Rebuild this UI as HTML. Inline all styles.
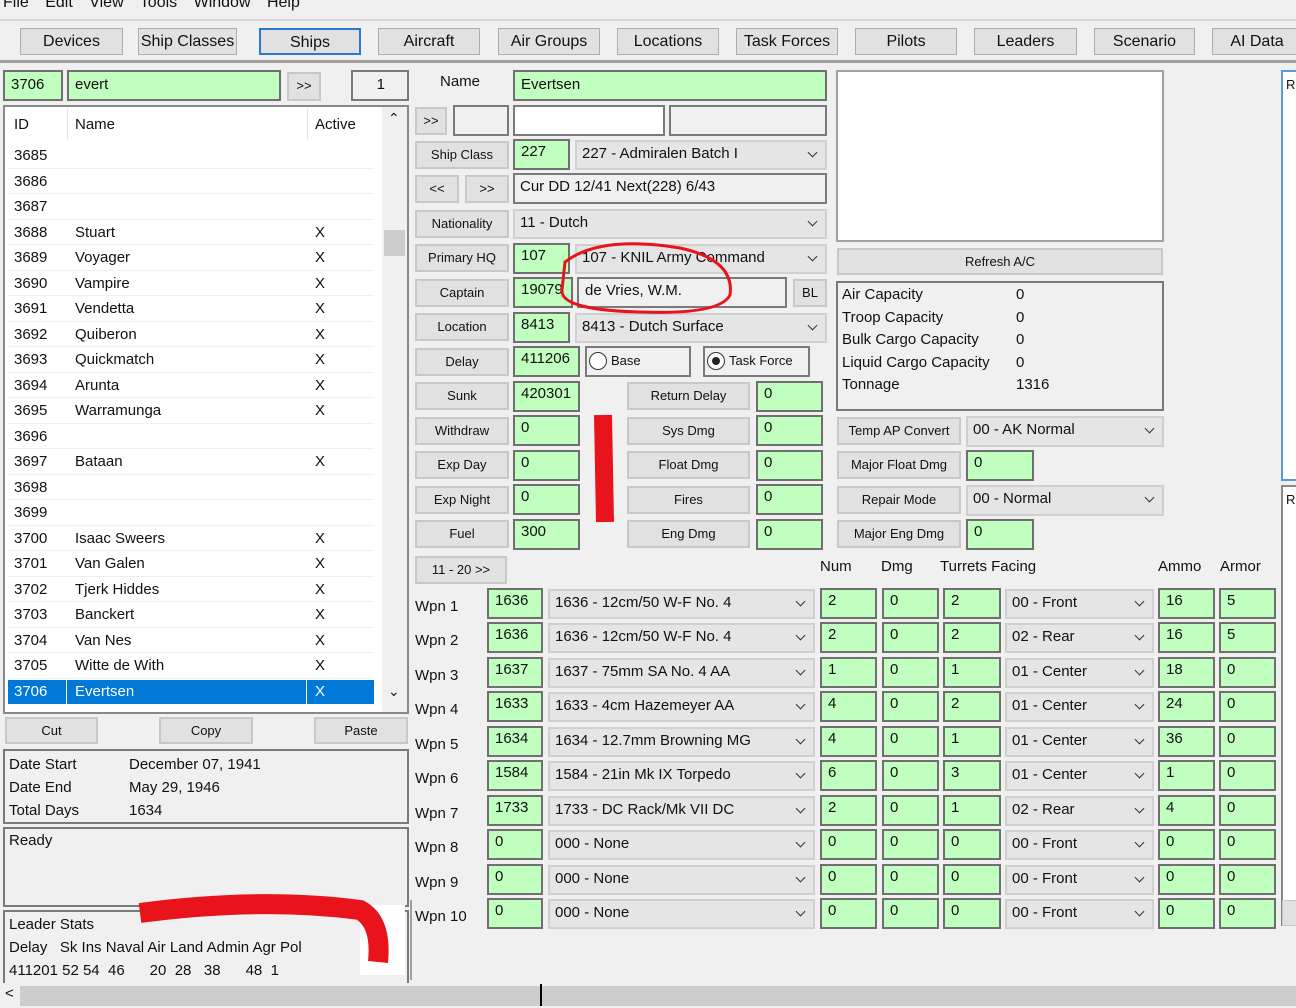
<!DOCTYPE html>
<html><head><meta charset="utf-8"><style>
*{box-sizing:border-box;margin:0;padding:0}
body{width:1296px;height:1008px;background:#f0f0f0;position:relative;overflow:hidden;font-family:"Liberation Sans",sans-serif;color:#111}
div{position:absolute}
.tb{height:27px;top:28px;background:#e1e1e1;border:1px solid #adadad;font-size:16px;text-align:center;line-height:25px}
.g{background:#c0ffc0;border:2px solid #6f6f6f;font-size:15px;padding-left:6px;line-height:22px}
.w{background:#fff;border:1px solid #7a7a7a}
.e{background:#f0f0f0;border:2px solid #7a7a7a}
.b{background:#e1e1e1;border:2px solid #c8c8c8;font-size:13px;text-align:center;line-height:24px}
.dd{background:#e5e5e5;border:2px solid #d0d0d0;font-size:15px;padding-left:5px;line-height:24px}
.dd:after{content:"";position:absolute;right:9px;top:7px;width:6px;height:6px;border-right:1.3px solid #333;border-bottom:1.3px solid #333;transform:rotate(45deg)}
.t{font-size:15px;white-space:nowrap}
.row{left:0;width:366px;height:25.5px;border-bottom:1px solid #f0f0f0;font-size:15px;line-height:25px}
.row span{position:absolute}
</style></head><body>
<div class="t" style="left:3px;top:-6px;font-size:16px;word-spacing:12px">File Edit View Tools Window Help</div>
<div style="left:0;top:19px;width:1296px;height:2px;background:#d8d8d8"></div>
<div class="tb" style="left:20px;width:103px">Devices</div>
<div class="tb" style="left:138px;width:99px">Ship Classes</div>
<div class="tb" style="left:259px;width:102px;border:2px solid #2a7ad2">Ships</div>
<div class="tb" style="left:378px;width:102px">Aircraft</div>
<div class="tb" style="left:498px;width:102px">Air Groups</div>
<div class="tb" style="left:617px;width:102px">Locations</div>
<div class="tb" style="left:736px;width:102px">Task Forces</div>
<div class="tb" style="left:855px;width:102px">Pilots</div>
<div class="tb" style="left:974px;width:103px">Leaders</div>
<div class="tb" style="left:1094px;width:101px">Scenario</div>
<div class="tb" style="left:1212px;width:90px">AI Data</div>
<div style="left:0;top:60px;width:1296px;height:3px;background:#a0a0a0"></div>

<!-- left -->
<div class="g" style="left:3px;top:70px;width:60px;height:31px;line-height:26px">3706</div>
<div class="g" style="left:67px;top:70px;width:214px;height:31px;line-height:26px">evert</div>
<div class="b" style="left:287px;top:72px;width:34px;height:29px">&gt;&gt;</div>
<div class="e" style="left:351px;top:70px;width:58px;height:31px;text-align:right;padding-right:22px;font-size:15px;line-height:26px">1</div>
<div class="w" style="left:3px;top:105px;width:406px;height:609px;border:2px solid #888"></div>
<div class="t" style="left:14px;top:116px">ID</div>
<div class="t" style="left:75px;top:116px">Name</div>
<div class="t" style="left:315px;top:116px">Active</div>
<div style="left:67px;top:108px;width:1px;height:32px;background:#e5e5e5"></div>
<div style="left:307px;top:108px;width:1px;height:32px;background:#e5e5e5"></div>
<div style="left:382px;top:107px;width:25px;height:605px;background:#f0f0f0"></div>
<div class="t" style="left:388px;top:110px;font-size:14px">&#8963;</div>
<div class="t" style="left:388px;top:683px;font-size:14px">&#8964;</div>
<div style="left:384px;top:230px;width:21px;height:26px;background:#cdcdcd"></div>
<div style="left:8px;top:143px;width:366px;height:537px">
<div class="row" style="position:relative"><span style="left:6px">3685</span></div>
<div class="row" style="position:relative"><span style="left:6px">3686</span></div>
<div class="row" style="position:relative"><span style="left:6px">3687</span></div>
<div class="row" style="position:relative"><span style="left:6px">3688</span><span style="left:67px">Stuart</span><span style="left:307px">X</span></div>
<div class="row" style="position:relative"><span style="left:6px">3689</span><span style="left:67px">Voyager</span><span style="left:307px">X</span></div>
<div class="row" style="position:relative"><span style="left:6px">3690</span><span style="left:67px">Vampire</span><span style="left:307px">X</span></div>
<div class="row" style="position:relative"><span style="left:6px">3691</span><span style="left:67px">Vendetta</span><span style="left:307px">X</span></div>
<div class="row" style="position:relative"><span style="left:6px">3692</span><span style="left:67px">Quiberon</span><span style="left:307px">X</span></div>
<div class="row" style="position:relative"><span style="left:6px">3693</span><span style="left:67px">Quickmatch</span><span style="left:307px">X</span></div>
<div class="row" style="position:relative"><span style="left:6px">3694</span><span style="left:67px">Arunta</span><span style="left:307px">X</span></div>
<div class="row" style="position:relative"><span style="left:6px">3695</span><span style="left:67px">Warramunga</span><span style="left:307px">X</span></div>
<div class="row" style="position:relative"><span style="left:6px">3696</span></div>
<div class="row" style="position:relative"><span style="left:6px">3697</span><span style="left:67px">Bataan</span><span style="left:307px">X</span></div>
<div class="row" style="position:relative"><span style="left:6px">3698</span></div>
<div class="row" style="position:relative"><span style="left:6px">3699</span></div>
<div class="row" style="position:relative"><span style="left:6px">3700</span><span style="left:67px">Isaac Sweers</span><span style="left:307px">X</span></div>
<div class="row" style="position:relative"><span style="left:6px">3701</span><span style="left:67px">Van Galen</span><span style="left:307px">X</span></div>
<div class="row" style="position:relative"><span style="left:6px">3702</span><span style="left:67px">Tjerk Hiddes</span><span style="left:307px">X</span></div>
<div class="row" style="position:relative"><span style="left:6px">3703</span><span style="left:67px">Banckert</span><span style="left:307px">X</span></div>
<div class="row" style="position:relative"><span style="left:6px">3704</span><span style="left:67px">Van Nes</span><span style="left:307px">X</span></div>
<div class="row" style="position:relative"><span style="left:6px">3705</span><span style="left:67px">Witte de With</span><span style="left:307px">X</span></div>
</div>
<div style="left:8px;top:680px;width:366px;height:24px;background:#0078d7;color:#fff;font-size:15px;line-height:24px"><span style="position:absolute;left:6px">3706</span><span style="position:absolute;left:67px">Evertsen</span><span style="position:absolute;left:307px">X</span><span style="position:absolute;left:58px;top:0;width:1px;height:24px;background:#fff"></span><span style="position:absolute;left:298px;top:0;width:1px;height:24px;background:#fff"></span></div>
<div class="b" style="left:5px;top:717px;width:93px;height:27px">Cut</div>
<div class="b" style="left:159px;top:717px;width:94px;height:27px">Copy</div>
<div class="b" style="left:314px;top:717px;width:94px;height:27px">Paste</div>
<div class="e" style="left:3px;top:749px;width:406px;height:75px"></div>
<div class="t" style="left:9px;top:753px;line-height:23px">Date Start<br>Date End<br>Total Days</div>
<div class="t" style="left:129px;top:753px;line-height:23px">December 07, 1941<br>May 29, 1946<br>1634</div>
<div class="e" style="left:3px;top:827px;width:406px;height:80px"></div>
<div class="t" style="left:9px;top:832px">Ready</div>
<div class="e" style="left:3px;top:910px;width:406px;height:75px"></div>
<div class="t" style="left:9px;top:913px;line-height:23px;white-space:pre">Leader Stats
Delay   Sk Ins Naval Air Land Admin Agr Pol
411201 52 54  46      20  28   38      48  1</div>
<div style="left:0;top:983px;width:1296px;height:25px;background:#f0f0f0"></div>
<div style="left:20px;top:986px;width:1276px;height:20px;background:#cdcdcd"></div>
<div class="t" style="left:5px;top:985px">&lt;</div>
<div style="left:540px;top:984px;width:2px;height:22px;background:#000"></div>

<!-- middle -->
<div class="t" style="left:440px;top:73px">Name</div>
<div class="g" style="left:513px;top:70px;width:314px;height:31px;line-height:26px">Evertsen</div>
<div class="b" style="left:415px;top:107px;width:32px;height:28px">&gt;&gt;</div>
<div class="e" style="left:453px;top:105px;width:56px;height:31px"></div>
<div class="w" style="left:513px;top:105px;width:152px;height:31px;border:2px solid #7a7a7a"></div>
<div class="e" style="left:669px;top:105px;width:158px;height:31px"></div>
<div class="b" style="left:415px;top:141px;width:94px;height:28px">Ship Class</div>
<div class="g" style="left:513px;top:139px;width:57px;height:31px">227</div>
<div class="dd" style="left:575px;top:140px;width:252px;height:30px">227 - Admiralen Batch I</div>
<div class="b" style="left:415px;top:175px;width:44px;height:28px">&lt;&lt;</div>
<div class="b" style="left:465px;top:175px;width:44px;height:28px">&gt;&gt;</div>
<div class="e" style="left:513px;top:173px;width:314px;height:31px;font-size:15px;padding-left:5px;line-height:24px">Cur DD 12/41 Next(228) 6/43</div>
<div class="b" style="left:415px;top:210px;width:94px;height:28px">Nationality</div>
<div class="dd" style="left:513px;top:209px;width:314px;height:30px">11 - Dutch</div>
<div class="b" style="left:415px;top:244px;width:94px;height:28px">Primary HQ</div>
<div class="g" style="left:513px;top:243px;width:57px;height:31px">107</div>
<div class="dd" style="left:575px;top:244px;width:252px;height:30px">107 - KNIL Army Command</div>
<div class="b" style="left:415px;top:279px;width:94px;height:28px">Captain</div>
<div class="g" style="left:513px;top:277px;width:60px;height:31px">19079</div>
<div class="e" style="left:577px;top:277px;width:210px;height:31px;font-size:15px;padding-left:6px;line-height:24px">de Vries, W.M.</div>
<div class="b" style="left:793px;top:279px;width:34px;height:28px">BL</div>
<div class="b" style="left:415px;top:313px;width:94px;height:28px">Location</div>
<div class="g" style="left:513px;top:312px;width:57px;height:31px">8413</div>
<div class="dd" style="left:575px;top:313px;width:252px;height:30px">8413 - Dutch Surface</div>
<div class="b" style="left:415px;top:348px;width:94px;height:28px">Delay</div>
<div class="g" style="left:513px;top:346px;width:67px;height:31px">411206</div>
<div class="e" style="left:585px;top:346px;width:106px;height:31px;font-size:13px;padding-left:24px;line-height:26px">Base<span style="position:absolute;left:2px;top:4px;width:18px;height:18px;border:1px solid #333;border-radius:50%;background:#fff"></span></div>
<div class="e" style="left:703px;top:346px;width:107px;height:31px;font-size:13px;padding-left:24px;line-height:26px">Task Force<span style="position:absolute;left:2px;top:4px;width:18px;height:18px;border:1px solid #333;border-radius:50%;background:#fff"></span><span style="position:absolute;left:7px;top:9px;width:8px;height:8px;border-radius:50%;background:#222"></span></div>
<div class="b" style="left:415px;top:382px;width:94px;height:28px">Sunk</div><div class="g" style="left:513px;top:381px;width:67px;height:31px">420301</div>
<div class="b" style="left:415px;top:417px;width:94px;height:28px">Withdraw</div><div class="g" style="left:513px;top:415px;width:67px;height:31px">0</div>
<div class="b" style="left:415px;top:451px;width:94px;height:28px">Exp Day</div><div class="g" style="left:513px;top:450px;width:67px;height:31px">0</div>
<div class="b" style="left:415px;top:486px;width:94px;height:28px">Exp Night</div><div class="g" style="left:513px;top:484px;width:67px;height:31px">0</div>
<div class="b" style="left:415px;top:520px;width:94px;height:28px">Fuel</div><div class="g" style="left:513px;top:519px;width:67px;height:31px">300</div>
<div class="b" style="left:627px;top:382px;width:123px;height:28px">Return Delay</div><div class="g" style="left:756px;top:381px;width:67px;height:31px">0</div>
<div class="b" style="left:627px;top:417px;width:123px;height:28px">Sys Dmg</div><div class="g" style="left:756px;top:415px;width:67px;height:31px">0</div>
<div class="b" style="left:627px;top:451px;width:123px;height:28px">Float Dmg</div><div class="g" style="left:756px;top:450px;width:67px;height:31px">0</div>
<div class="b" style="left:627px;top:486px;width:123px;height:28px">Fires</div><div class="g" style="left:756px;top:484px;width:67px;height:31px">0</div>
<div class="b" style="left:627px;top:520px;width:123px;height:28px">Eng Dmg</div><div class="g" style="left:756px;top:519px;width:67px;height:31px">0</div>
<div class="b" style="left:415px;top:556px;width:92px;height:28px">11 - 20 &gt;&gt;</div>
<div class="t" style="left:820px;top:558px">Num</div>
<div class="t" style="left:881px;top:558px">Dmg</div>
<div class="t" style="left:940px;top:558px">Turrets Facing</div>
<div class="t" style="left:1158px;top:558px">Ammo</div>
<div class="t" style="left:1220px;top:558px">Armor</div>

<!-- weapons -->
<div style="left:0;top:588px;width:1296px;height:35px">
<div class="t" style="left:415px;top:10px">Wpn 1</div><div class="g" style="left:487px;top:0;width:56px;height:31px">1636</div><div class="dd" style="left:548px;top:1px;width:267px;height:30px">1636 - 12cm/50 W-F No. 4</div><div class="g" style="left:820px;top:0;width:57px;height:31px">2</div><div class="g" style="left:882px;top:0;width:57px;height:31px">0</div><div class="g" style="left:943px;top:0;width:58px;height:31px">2</div><div class="dd" style="left:1005px;top:1px;width:149px;height:30px">00 - Front</div><div class="g" style="left:1158px;top:0;width:57px;height:31px">16</div><div class="g" style="left:1219px;top:0;width:57px;height:31px">5</div>
</div>
<div style="left:0;top:622px;width:1296px;height:35px">
<div class="t" style="left:415px;top:10px">Wpn 2</div><div class="g" style="left:487px;top:0;width:56px;height:31px">1636</div><div class="dd" style="left:548px;top:1px;width:267px;height:30px">1636 - 12cm/50 W-F No. 4</div><div class="g" style="left:820px;top:0;width:57px;height:31px">2</div><div class="g" style="left:882px;top:0;width:57px;height:31px">0</div><div class="g" style="left:943px;top:0;width:58px;height:31px">2</div><div class="dd" style="left:1005px;top:1px;width:149px;height:30px">02 - Rear</div><div class="g" style="left:1158px;top:0;width:57px;height:31px">16</div><div class="g" style="left:1219px;top:0;width:57px;height:31px">5</div>
</div>
<div style="left:0;top:657px;width:1296px;height:35px">
<div class="t" style="left:415px;top:10px">Wpn 3</div><div class="g" style="left:487px;top:0;width:56px;height:31px">1637</div><div class="dd" style="left:548px;top:1px;width:267px;height:30px">1637 - 75mm SA No. 4 AA</div><div class="g" style="left:820px;top:0;width:57px;height:31px">1</div><div class="g" style="left:882px;top:0;width:57px;height:31px">0</div><div class="g" style="left:943px;top:0;width:58px;height:31px">1</div><div class="dd" style="left:1005px;top:1px;width:149px;height:30px">01 - Center</div><div class="g" style="left:1158px;top:0;width:57px;height:31px">18</div><div class="g" style="left:1219px;top:0;width:57px;height:31px">0</div>
</div>
<div style="left:0;top:691px;width:1296px;height:35px">
<div class="t" style="left:415px;top:10px">Wpn 4</div><div class="g" style="left:487px;top:0;width:56px;height:31px">1633</div><div class="dd" style="left:548px;top:1px;width:267px;height:30px">1633 - 4cm Hazemeyer AA</div><div class="g" style="left:820px;top:0;width:57px;height:31px">4</div><div class="g" style="left:882px;top:0;width:57px;height:31px">0</div><div class="g" style="left:943px;top:0;width:58px;height:31px">2</div><div class="dd" style="left:1005px;top:1px;width:149px;height:30px">01 - Center</div><div class="g" style="left:1158px;top:0;width:57px;height:31px">24</div><div class="g" style="left:1219px;top:0;width:57px;height:31px">0</div>
</div>
<div style="left:0;top:726px;width:1296px;height:35px">
<div class="t" style="left:415px;top:10px">Wpn 5</div><div class="g" style="left:487px;top:0;width:56px;height:31px">1634</div><div class="dd" style="left:548px;top:1px;width:267px;height:30px">1634 - 12.7mm Browning MG</div><div class="g" style="left:820px;top:0;width:57px;height:31px">4</div><div class="g" style="left:882px;top:0;width:57px;height:31px">0</div><div class="g" style="left:943px;top:0;width:58px;height:31px">1</div><div class="dd" style="left:1005px;top:1px;width:149px;height:30px">01 - Center</div><div class="g" style="left:1158px;top:0;width:57px;height:31px">36</div><div class="g" style="left:1219px;top:0;width:57px;height:31px">0</div>
</div>
<div style="left:0;top:760px;width:1296px;height:35px">
<div class="t" style="left:415px;top:10px">Wpn 6</div><div class="g" style="left:487px;top:0;width:56px;height:31px">1584</div><div class="dd" style="left:548px;top:1px;width:267px;height:30px">1584 - 21in Mk IX Torpedo</div><div class="g" style="left:820px;top:0;width:57px;height:31px">6</div><div class="g" style="left:882px;top:0;width:57px;height:31px">0</div><div class="g" style="left:943px;top:0;width:58px;height:31px">3</div><div class="dd" style="left:1005px;top:1px;width:149px;height:30px">01 - Center</div><div class="g" style="left:1158px;top:0;width:57px;height:31px">1</div><div class="g" style="left:1219px;top:0;width:57px;height:31px">0</div>
</div>
<div style="left:0;top:795px;width:1296px;height:35px">
<div class="t" style="left:415px;top:10px">Wpn 7</div><div class="g" style="left:487px;top:0;width:56px;height:31px">1733</div><div class="dd" style="left:548px;top:1px;width:267px;height:30px">1733 - DC Rack/Mk VII DC</div><div class="g" style="left:820px;top:0;width:57px;height:31px">2</div><div class="g" style="left:882px;top:0;width:57px;height:31px">0</div><div class="g" style="left:943px;top:0;width:58px;height:31px">1</div><div class="dd" style="left:1005px;top:1px;width:149px;height:30px">02 - Rear</div><div class="g" style="left:1158px;top:0;width:57px;height:31px">4</div><div class="g" style="left:1219px;top:0;width:57px;height:31px">0</div>
</div>
<div style="left:0;top:829px;width:1296px;height:35px">
<div class="t" style="left:415px;top:10px">Wpn 8</div><div class="g" style="left:487px;top:0;width:56px;height:31px">0</div><div class="dd" style="left:548px;top:1px;width:267px;height:30px">000 - None</div><div class="g" style="left:820px;top:0;width:57px;height:31px">0</div><div class="g" style="left:882px;top:0;width:57px;height:31px">0</div><div class="g" style="left:943px;top:0;width:58px;height:31px">0</div><div class="dd" style="left:1005px;top:1px;width:149px;height:30px">00 - Front</div><div class="g" style="left:1158px;top:0;width:57px;height:31px">0</div><div class="g" style="left:1219px;top:0;width:57px;height:31px">0</div>
</div>
<div style="left:0;top:864px;width:1296px;height:35px">
<div class="t" style="left:415px;top:10px">Wpn 9</div><div class="g" style="left:487px;top:0;width:56px;height:31px">0</div><div class="dd" style="left:548px;top:1px;width:267px;height:30px">000 - None</div><div class="g" style="left:820px;top:0;width:57px;height:31px">0</div><div class="g" style="left:882px;top:0;width:57px;height:31px">0</div><div class="g" style="left:943px;top:0;width:58px;height:31px">0</div><div class="dd" style="left:1005px;top:1px;width:149px;height:30px">00 - Front</div><div class="g" style="left:1158px;top:0;width:57px;height:31px">0</div><div class="g" style="left:1219px;top:0;width:57px;height:31px">0</div>
</div>
<div style="left:0;top:898px;width:1296px;height:35px">
<div class="t" style="left:415px;top:10px">Wpn 10</div><div class="g" style="left:487px;top:0;width:56px;height:31px">0</div><div class="dd" style="left:548px;top:1px;width:267px;height:30px">000 - None</div><div class="g" style="left:820px;top:0;width:57px;height:31px">0</div><div class="g" style="left:882px;top:0;width:57px;height:31px">0</div><div class="g" style="left:943px;top:0;width:58px;height:31px">0</div><div class="dd" style="left:1005px;top:1px;width:149px;height:30px">00 - Front</div><div class="g" style="left:1158px;top:0;width:57px;height:31px">0</div><div class="g" style="left:1219px;top:0;width:57px;height:31px">0</div>
</div>
<div style="left:410px;top:900px;width:2px;height:80px;background:#a0a0a0"></div>

<!-- right -->
<div class="w" style="left:836px;top:70px;width:328px;height:172px;border:2px solid #a0a0a0"></div>
<div class="b" style="left:837px;top:248px;width:326px;height:27px">Refresh A/C</div>
<div class="e" style="left:836px;top:281px;width:328px;height:130px"></div>
<div class="t" style="left:842px;top:284px;line-height:22.5px">Air Capacity<br>Troop Capacity<br>Bulk Cargo Capacity<br>Liquid Cargo Capacity<br>Tonnage</div>
<div class="t" style="left:1016px;top:284px;line-height:22.5px">0<br>0<br>0<br>0<br>1316</div>
<div class="b" style="left:837px;top:417px;width:124px;height:28px">Temp AP Convert</div>
<div class="dd" style="left:966px;top:416px;width:198px;height:31px">00 - AK Normal</div>
<div class="b" style="left:837px;top:451px;width:124px;height:28px">Major Float Dmg</div>
<div class="g" style="left:966px;top:450px;width:68px;height:31px">0</div>
<div class="b" style="left:837px;top:486px;width:124px;height:28px">Repair Mode</div>
<div class="dd" style="left:966px;top:485px;width:198px;height:31px">00 - Normal</div>
<div class="b" style="left:837px;top:520px;width:124px;height:28px">Major Eng Dmg</div>
<div class="g" style="left:966px;top:519px;width:68px;height:31px">0</div>
<div style="left:1281px;top:70px;width:20px;height:411px;background:#fff;border:2px solid #5a9ad8;font-size:13px;padding:5px 0 0 3px">R</div>
<div style="left:1281px;top:485px;width:20px;height:441px;background:#fff;border:2px solid #888;font-size:13px;padding:5px 0 0 3px">R</div>
<div style="left:1282px;top:900px;width:20px;height:26px;background:#e1e1e1;border:1px solid #c8c8c8"></div>

<svg style="position:absolute;left:0;top:0" width="1296" height="1008">
<path d="M360 905 L405 905 L405 975 L360 975 Z" fill="#fff"/>
<path d="M140 913 Q260 897 360 910 Q382 922 378 962" stroke="#e8131b" stroke-width="20" fill="none"/>
<path d="M565 262 Q600 235 680 248 Q735 260 730 295 Q720 315 640 312 Q560 310 562 290 Z" stroke="#e8131b" stroke-width="3" fill="none"/>
<path d="M603 415 L605 522" stroke="#e8131b" stroke-width="18" fill="none"/>
</svg>
</body></html>
